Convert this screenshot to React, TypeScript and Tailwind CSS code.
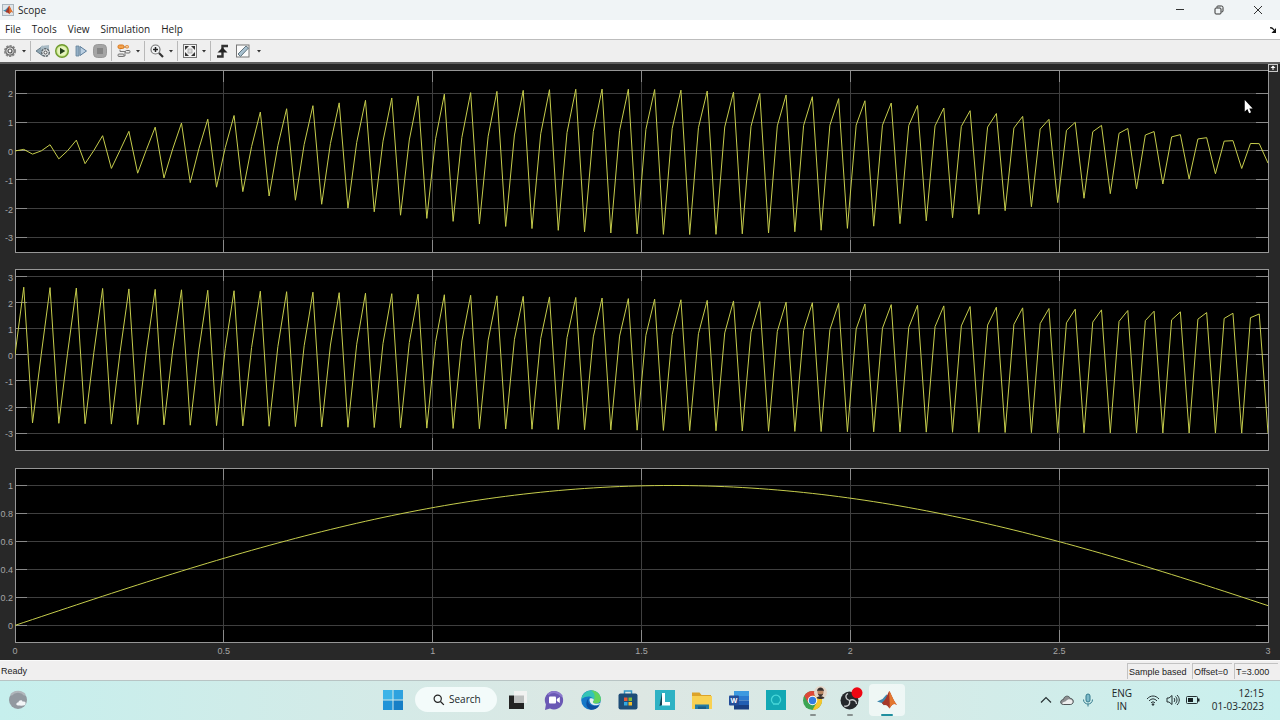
import type { ReactNode } from 'react';

type Point = [number, number];

interface PlotProps {
  label: string;
  min: number;
  max: number;
  ticks: number[];
  data: Point[];
  showTime?: boolean;
  className: string;
}

const T_END = 3;
const TIME_TICKS = [0, 0.5, 1, 1.5, 2, 2.5, 3];
const SAMPLES = 143;

const times = Array.from({ length: SAMPLES + 1 }, (_, i) => (i * T_END) / SAMPLES);
const message: Point[] = times.map((t) => [t, Math.sin(t)]);
const carrier: Point[] = times.map((t) => [t, 3 * Math.sin(100 * t)]);
const modulated: Point[] = times.map((t) => [t, 3 * Math.sin(100 * t) * Math.sin(t)]);

function Plot({ label, min, max, ticks, data, showTime, className }: PlotProps) {
  const yPos = (v: number) => `${((max - v) / (max - min)) * 100}%`;
  const xPos = (t: number) => `${(t / T_END) * 100}%`;
  const points = data
    .map(([t, v]) => `${((t / T_END) * 1000).toFixed(2)},${(((max - v) / (max - min)) * 1000).toFixed(2)}`)
    .join(' ');

  return (
    <div className={`relative min-h-24 ${className}`}>
      <svg role="img" aria-label={label} className="absolute inset-0 h-full w-full overflow-visible bg-black">
        <g stroke="#3f3f3f" strokeWidth="1" shapeRendering="crispEdges">
          {ticks.map((v) => (
            <line key={v} x1="0" x2="100%" y1={yPos(v)} y2={yPos(v)} />
          ))}
          {TIME_TICKS.slice(1, -1).map((t) => (
            <line key={t} x1={xPos(t)} x2={xPos(t)} y1="0" y2="100%" />
          ))}
        </g>
        <g stroke="#8a8a8a" strokeWidth="1" shapeRendering="crispEdges">
          {ticks.map((v) => (
            <line key={v} x1="0" x2="12" y1={yPos(v)} y2={yPos(v)} />
          ))}
          {TIME_TICKS.slice(1, -1).map((t) => (
            <line key={t} x1={xPos(t)} x2={xPos(t)} y1="0" y2="12" />
          ))}
          <svg x="100%" className="overflow-visible">
            {ticks.map((v) => (
              <line key={v} x1="-12" x2="0" y1={yPos(v)} y2={yPos(v)} />
            ))}
          </svg>
          <svg y="100%" className="overflow-visible">
            {TIME_TICKS.slice(1, -1).map((t) => (
              <line key={t} x1={xPos(t)} x2={xPos(t)} y1="-12" y2="0" />
            ))}
          </svg>
          <rect width="100%" height="100%" fill="none" stroke="#969696" />
        </g>
        <svg viewBox="0 0 1000 1000" preserveAspectRatio="none" width="100%" height="100%">
          <polyline points={points} fill="none" stroke="#c6cd4c" strokeWidth="1" vectorEffect="non-scaling-stroke" />
        </svg>
        <g fill="#a6a6a6" className="text-[9px]">
          {ticks.map((v) => (
            <text key={v} x="-2" y={yPos(v)} dy="4" textAnchor="end">
              {v}
            </text>
          ))}
          {showTime && (
            <svg y="100%" className="overflow-visible">
              {TIME_TICKS.map((t) => (
                <text key={t} x={xPos(t)} y="12" textAnchor="middle">
                  {t}
                </text>
              ))}
            </svg>
          )}
        </g>
      </svg>
    </div>
  );
}

function MatlabMark() {
  return (
    <>
      <path d="M0 11.500 5.500 9l4-4.500 2.500 2L7 15.200 4.800 13z" fill="#3f87ad" />
      <path d="M12.200 1c2 2.500 3.700 8.800 7.800 14-2.500-1.700-4.500-2-7.500 3.500C11 16.500 9.500 14.500 7 15.200L4.800 13C9 10 10.500 4 12.200 1z" fill="#a6382a" />
      <path d="M12.200 1c2 2.500 3.700 8.800 7.800 14-2.500-1.700-4.500-2-7.500 3.500.8-6-.6-12.500-.3-17.500z" fill="#e3772f" />
    </>
  );
}

function ToolButton({ label, children, disabled }: { label: string; children: ReactNode; disabled?: boolean }) {
  return (
    <button aria-label={label} disabled={disabled} className="flex h-5 w-4 items-center justify-center">
      <svg viewBox="0 0 16 16" className="h-4 w-4">
        {children}
      </svg>
    </button>
  );
}

function Caret({ label }: { label: string }) {
  return (
    <button aria-label={label} className="flex h-5 w-2 items-center justify-center">
      <svg viewBox="0 0 8 8" className="h-2 w-2">
        <path d="M2 3h4L4 5.500z" fill="#333" />
      </svg>
    </button>
  );
}

function Separator() {
  return <div className="h-5 w-px bg-[#b9b9b9]" />;
}

function Toolbar() {
  return (
    <div role="toolbar" className="flex h-[23px] items-center gap-1 border-t border-[#bdbdbd] bg-[#efefef] pl-0.5">
      <div className="flex items-center gap-0.5">
        <ToolButton label="Configuration properties">
          <circle cx="8" cy="8" r="5.300" fill="none" stroke="#8a8a8a" strokeWidth="1.600" strokeDasharray="2.300 1.100" />
          <circle cx="8" cy="8" r="4.200" fill="#e9e9e9" stroke="#6a6a6a" strokeWidth="1.200" />
          <circle cx="8" cy="8" r="2" fill="#f4f4f4" stroke="#555" strokeWidth="1.200" />
        </ToolButton>
        <Caret label="Configuration menu" />
        <Separator />
      </div>
      <div className="flex items-center gap-[3px]">
        <ToolButton label="Step back">
          <path d="M1 8l7-5v10z" fill="#8fa6b3" stroke="#566b78" strokeWidth=".8" />
          <path d="M6 3l8-1v5H6z" fill="#a9bac4" />
          <circle cx="10.500" cy="9.500" r="3.800" fill="#dfe3e5" stroke="#5e676c" strokeWidth="1.400" strokeDasharray="2.400 .8" />
          <circle cx="10.500" cy="9.500" r="1.500" fill="#fff" stroke="#4b4b4b" strokeWidth="1" />
        </ToolButton>
        <ToolButton label="Run">
          <circle cx="8" cy="8" r="6.300" fill="#c8e48e" stroke="#6f9a2c" strokeWidth="1.400" />
          <circle cx="8" cy="8" r="4.600" fill="#e6f3bd" />
          <path d="M6 4.700L11.300 8 6 11.300z" fill="#24401b" />
        </ToolButton>
        <ToolButton label="Step forward">
          <path d="M3 3h3v10H3z" fill="#93aec4" stroke="#66839b" strokeWidth=".8" />
          <path d="M7 3.500L13.500 8 7 12.500z" fill="#bcd0e2" stroke="#5b7c9a" />
        </ToolButton>
        <ToolButton label="Stop" disabled>
          <rect x="1.500" y="1.500" width="13" height="13" rx="4" fill="#a5a5a5" stroke="#999" />
          <path d="M5 5h6v6H5z" fill="#868686" />
        </ToolButton>
        <Separator />
      </div>
      <div className="flex items-center gap-0.5">
        <ToolButton label="Highlight block">
          <path d="M7 4h3M4 6.500v2h5M9 8.500V13H7" fill="none" stroke="#777" />
          <rect x="2" y="2" width="6" height="3.500" rx="1.500" fill="#f3a24b" stroke="#d9771c" />
          <rect x="9.500" y="2.500" width="3" height="2.500" rx="1" fill="#f8c88f" stroke="#df8a3c" />
          <rect x="9.500" y="7.500" width="4.500" height="2.500" rx="1" fill="#eee" stroke="#6d6d6d" />
          <rect x="2" y="11" width="6" height="2.500" rx="1" fill="#ddd" stroke="#747474" />
        </ToolButton>
        <Caret label="Highlight menu" />
        <Separator />
      </div>
      <div className="flex items-center gap-0.5">
        <ToolButton label="Zoom">
          <circle cx="6.500" cy="6.500" r="4.500" fill="#f3f5f6" stroke="#777" strokeWidth="1.200" />
          <path d="M6.500 4v5M4 6.500h5" stroke="#222" strokeWidth="1.500" />
          <path d="M10 10l4 4" stroke="#333" strokeWidth="2.200" />
        </ToolButton>
        <Caret label="Zoom menu" />
        <Separator />
      </div>
      <div className="flex items-center gap-0.5">
        <ToolButton label="Scale axes">
          <rect x="1.500" y="1.500" width="13" height="13" fill="#f4f4f4" stroke="#777" />
          <rect x="6" y="6" width="4" height="4" fill="#ddd" stroke="#aaa" strokeWidth=".8" />
          <path d="M3 3h4L3 7zM13 3v4L9 3zM3 13V9l4 4zM13 13H9l4-4z" fill="#333" />
        </ToolButton>
        <Caret label="Scale menu" />
        <Separator />
      </div>
      <div className="flex items-center gap-1">
        <ToolButton label="Triggers">
          <path d="M2 13.500h5.500V3H13" fill="none" stroke="#333" strokeWidth="2.400" />
          <path d="M2.500 9.500L7.500 4.500l5 5z" fill="#222" />
        </ToolButton>
        <ToolButton label="Measurements">
          <rect x="1.500" y="2" width="12.500" height="12" fill="#fbfbfb" stroke="#777" />
          <path d="M3 11L11 3l2.500 2-8 8.500z" fill="#a8c0cf" stroke="#60747f" />
        </ToolButton>
        <Caret label="Measurements menu" />
      </div>
    </div>
  );
}

function TaskIcon({ label, children, active, running }: { label: string; children: ReactNode; active?: boolean; running?: boolean }) {
  return (
    <button
      aria-label={label}
      className={`relative flex h-8 w-9 items-center justify-center rounded ${active ? 'bg-white/60' : ''}`}
    >
      <svg viewBox="0 0 20 20" className="h-5 w-5 overflow-visible">
        {children}
      </svg>
      {running && <span className="absolute bottom-0 h-0.5 w-1.5 rounded-full bg-[#87908f]" />}
      {active && <span className="absolute bottom-0 h-0.5 w-3 rounded-full bg-[#1f8f9f]" />}
    </button>
  );
}

function Taskbar() {
  return (
    <footer className="grid h-10 grid-cols-[1fr_auto_1fr] items-center border-t border-[#b8c4c4] bg-linear-to-r from-[#c6efed] via-[#dde7e3] to-[#c9f0ee] pb-0.5 font-['Open_Sans','Noto_Sans',sans-serif] text-[#202628]">
      <button aria-label="Widgets" className="ml-2 flex w-5 justify-center">
        <svg viewBox="0 0 20 20" className="h-5 w-5">
          <circle cx="10" cy="10" r="9" fill="#9299a0" />
          <path d="M3 5a9 9 0 0 1 14 0" fill="none" stroke="#b0b6bb" strokeWidth="2" />
          <path d="M10 15.500c-2.500-.3-2-3.200.3-3 .6-2.700 3.700-2.700 4.400-.8 3-.5 3.700 1.300 2.300 3.300-1.500.8-4 .7-7 .5z" fill="#f2f5f7" />
        </svg>
      </button>

      <nav className="flex items-center gap-px">
        <TaskIcon label="Start">
          <path d="M0 0h9.500v9.500H0z" fill="#3cb4e8" />
          <path d="M10.500 0H20v9.500h-9.500z" fill="#2ea2df" />
          <path d="M0 10.500h9.500V20H0z" fill="#2094d8" />
          <path d="M10.500 10.500H20V20h-9.500z" fill="#167fc6" />
        </TaskIcon>
        <button className="mr-px ml-[3px] flex h-[25px] w-[82px] items-center gap-1 rounded-full bg-[#f3fbfa] pl-[18px] text-[10px]">
          <svg viewBox="0 0 14 14" className="h-3 w-3">
            <circle cx="5.500" cy="5.500" r="4.200" fill="none" stroke="#222" strokeWidth="1.400" />
            <path d="M8.700 8.700l4 4" stroke="#222" strokeWidth="1.500" />
          </svg>
          Search
        </button>
        <TaskIcon label="Task view">
          <path d="M2 5.500h15V19H2z" fill="#222" />
          <path d="M7 1h13v12H7z" fill="#f1f2f1" />
          <path d="M7 5.500h10V13H7z" fill="#bcbfbe" />
        </TaskIcon>
        <TaskIcon label="Chat">
          <path d="M10 1a9.200 9.200 0 1 1-4 17.500L1 20l.9-5.400A9.200 9.200 0 0 1 10 1z" fill="#6b59b5" />
          <path d="M4 4.500a9.200 9.200 0 0 1 14 2" fill="none" stroke="#8b78cd" strokeWidth="2" />
          <rect x="5" y="6.500" width="7" height="7" rx="1" fill="#fff" />
          <path d="M12.800 9l3-2v6l-3-2z" fill="#fff" />
        </TaskIcon>
        <TaskIcon label="Edge">
          <circle cx="10" cy="10" r="9.800" fill="#1678c8" />
          <path d="M.3 9C1.500 2 8-1 14 1c4 1.500 6 5 5.800 8.500-.3 3-3 4.500-6.300 4-1.700-.3-2-1-1.200-2C14 8 8 3.500.3 9z" fill="#35c4b5" />
          <path d="M10 .3c5 0 10 4 9.800 9.200-.3 3-3 4.500-6.300 4-1.700-.3-2-1-1.200-2C14 8.500 15 3 10 .3z" fill="#63d45c" />
          <path d="M8 8c-3 4.500 1.500 9.500 10.500 7.300A10 10 0 0 1 10 19.800C4.500 18.500 4 11 8 8z" fill="#0d4f9e" />
          <path d="M8.800 8.600c1.600-1 4-.3 4 1.400 0 1.200-1.600 1.500-.6 2.700 1.200 1.500 5 1.200 7.800.2-2.300 2.900-7.800 3.400-10.100.7-1.300-1.500-1.700-3.500-1.100-5z" fill="#e6f0ee" />
        </TaskIcon>
        <TaskIcon label="Microsoft Store">
          <path d="M6.500 4V1h7v3" fill="none" stroke="#3498c8" strokeWidth="1.500" />
          <rect x=".5" y="3.500" width="19" height="16" rx="2" fill="#1d4d78" />
          <path d="M6 7.500h3.500V11H6z" fill="#ea5a36" />
          <path d="M10.500 7.500H14V11h-3.500z" fill="#84bd37" />
          <path d="M6 12h3.500v3.500H6z" fill="#33a8e0" />
          <path d="M10.500 12H14v3.500h-3.500z" fill="#f4bd2b" />
        </TaskIcon>
        <TaskIcon label="L">
          <path d="M0 0h20v20H0z" fill="#2fb2c4" />
          <path d="M4.500 16L7 3v12z" fill="#173f50" />
          <path d="M7 3h3v9h5v3.500H7z" fill="#fff" />
        </TaskIcon>
        <TaskIcon label="File Explorer">
          <path d="M0 2.500h7.500L9.500 5H19v5H0z" fill="#dca32a" />
          <path d="M0 6h20v13H0z" fill="#f8d152" />
          <path d="M3 14.500h14V19H3z" fill="#257da5" />
          <path d="M6 16.500h8V19H6z" fill="#1b5d85" />
        </TaskIcon>
        <TaskIcon label="Word">
          <path d="M5 1h15v5H5z" fill="#3d9ae0" />
          <path d="M5 6h15v4.500H5z" fill="#2c7bd0" />
          <path d="M5 10.500h15V15H5z" fill="#215eb3" />
          <path d="M5 15h15v4.500H5z" fill="#193f82" />
          <rect y="5.500" width="10" height="10" rx="1" fill="#234d99" />
          <text x="5" y="13" textAnchor="middle" fontSize="7" fontWeight="700" fill="#fff">W</text>
        </TaskIcon>
        <TaskIcon label="Recorder">
          <path d="M0 0h20v20H0z" fill="#13a8b4" />
          <path d="M7 14h6M7.300 13.500a4.600 4.600 0 1 1 5.400 0" fill="none" stroke="#49d7d9" strokeWidth="1.300" />
        </TaskIcon>
        <TaskIcon label="Chrome" running>
          <circle cx="9.500" cy="10.500" r="9.500" fill="#3ca453" />
          <path d="M1.300 5.700A9.500 9.500 0 0 1 17.700 5.700H9.500L5.400 12.900z" fill="#dd4839" />
          <path d="M17.700 5.700a9.500 9.500 0 0 1-8.200 14.300l4.100-7.200-4.100-7.100z" fill="#f5c52c" />
          <circle cx="9.500" cy="10.500" r="4.700" fill="#fff" />
          <circle cx="9.500" cy="10.500" r="3.700" fill="#347de0" />
          <circle cx="17.500" cy="2.500" r="6.500" fill="#e4d6c8" />
          <circle cx="17.500" cy="2.500" r="3" fill="#b98764" />
          <path d="M14 1.500c0-5.500 7-5.500 7 0l-1-.8h-5zM15 3.500c0 3.500 5 3.500 5 0l-1 .8h-3zM13.500 8c1-2.500 7-2.500 8 0-2 1.300-6 1.300-8 0z" fill="#39302d" />
        </TaskIcon>
        <TaskIcon label="OBS Studio" running>
          <circle cx="9.500" cy="10.500" r="9" fill="#25282b" />
          <path d="M9.500 10.500C5 9 5 5 8 3.500M9.500 10.500c4-2 7 .5 7 3.500M9.500 10.500c1 4.500-2 6.500-5.500 5.500" fill="none" stroke="#c9cccd" strokeWidth="1.300" />
          <circle cx="17" cy="2.800" r="5.500" fill="#ee0612" />
        </TaskIcon>
        <TaskIcon label="MATLAB" active>
          <MatlabMark />
        </TaskIcon>
      </nav>

      <div className="flex items-center justify-end pr-4 text-[10px] leading-[13px]">
        <button aria-label="Show hidden icons" className="mr-2 flex w-3 justify-center">
          <svg viewBox="0 0 12 12" className="h-3 w-3" fill="none" stroke="#293335" strokeWidth="1.200">
            <path d="M1 8.500l5-5 5 5" />
          </svg>
        </button>
        <button aria-label="OneDrive" className="mr-2">
          <svg viewBox="0 0 14 12" className="h-3 w-3.5">
            <path d="M3.500 10.500C-.5 10.500 0 5.500 3.500 5.500 4 1.500 9 1 10.300 4.500c4-.2 4 6 0 6z" fill="#8d8f91" stroke="#505658" />
            <path d="M2.500 10C2 7.500 5.500 8 6 7c2-2.500 6-2 6.500.5.200 1.500-.7 2.500-2 2.500z" fill="#eee" />
          </svg>
        </button>
        <button aria-label="Microphone" className="mr-4">
          <svg viewBox="0 0 12 14" className="h-3.5 w-3" fill="none" stroke="#347b8d">
            <rect x="4" y="1" width="4" height="8" rx="2" fill="#7dbac9" />
            <path d="M1.500 6.500c0 6 9 6 9 0M6 11v2.500" />
          </svg>
        </button>
        <button className="mr-3 w-6 text-center">ENG<br />IN</button>
        <button aria-label="Network, volume and battery" className="mr-3 flex items-center gap-1.5">
          <svg viewBox="0 0 14 12" className="h-3 w-3.5" fill="none" stroke="#253033">
            <path d="M1 5c3.500-4 8.500-4 12 0M3 7c2.500-2.800 5.500-2.800 8 0M5 9c1.200-1.500 2.800-1.500 4 0" />
            <circle cx="7" cy="10.500" r=".8" fill="#253033" />
          </svg>
          <svg viewBox="0 0 14 12" className="h-3 w-3.5" fill="none" stroke="#253033">
            <path d="M1 4h2l3-2.500v9L3 8H1zM8 4c1 1 1 3 0 4M9.500 2.500c2 2 2 5 0 7M11 1c3 3 3 7 0 10" />
          </svg>
          <svg viewBox="0 0 14 12" className="h-3 w-3.5">
            <rect x=".5" y="2.500" width="11" height="7" rx="1" fill="none" stroke="#253033" />
            <path d="M2 4h5v4H2zM12 4.500h1.500v3H12z" fill="#162023" />
          </svg>
        </button>
        <time className="text-right" dateTime="2023-03-01T12:15">12:15<br />01-03-2023</time>
      </div>
    </footer>
  );
}

export default function App() {
  return (
    <div className="flex min-h-screen flex-col overflow-hidden bg-white font-['Liberation_Sans',Arial,sans-serif]">
      <header className="flex h-5 items-center justify-between bg-[#f0f4f6] font-['Open_Sans','Noto_Sans',sans-serif] text-[10px] text-[#222]">
        <div className="flex items-center gap-1 pl-0.5">
          <span className="flex h-3 w-3 items-center justify-center border border-[#a9b5bd] bg-[#dfe5e9]">
            <svg viewBox="0 0 20 20" className="h-2.5 w-2.5">
              <MatlabMark />
            </svg>
          </span>
          <h1>Scope</h1>
        </div>
        <div className="flex items-center gap-[27px] pr-4">
          <button aria-label="Minimize">
            <svg viewBox="0 0 12 12" className="h-3 w-3"><path d="M2 5.500h8" stroke="#333" /></svg>
          </button>
          <button aria-label="Restore">
            <svg viewBox="0 0 12 12" className="h-3 w-3" fill="none" stroke="#333">
              <rect x="2" y="4" width="6" height="6" rx="1" />
              <path d="M4 3.500V2.500q0-.5 1-.5h3.500Q10 2 10 3.500V7q0 1-1.500 1" />
            </svg>
          </button>
          <button aria-label="Close">
            <svg viewBox="0 0 12 12" className="h-3 w-3" stroke="#333"><path d="M2 2l8 8M10 2l-8 8" /></svg>
          </button>
        </div>
      </header>

      <nav className="flex h-[19px] items-center bg-white pr-1 pl-[5px] font-['Open_Sans','Noto_Sans',sans-serif] text-[10px] text-[#222]">
        <div className="flex flex-1 gap-[11px]">
          <button>File</button>
          <button>Tools</button>
          <button>View</button>
          <button>Simulation</button>
          <button>Help</button>
        </div>
        <button aria-label="Dock window">
          <svg viewBox="0 0 6 6" className="h-1.5 w-1.5">
            <path d="M0 1q2-1 4 2" fill="none" stroke="#111" strokeWidth="1.300" />
            <path d="M6 1v5H1.500z" fill="#111" />
          </svg>
        </button>
      </nav>

      <Toolbar />

      <main className="relative flex flex-1 flex-col gap-[17px] border-t-2 border-[#5f5f5f] bg-[#282828] pt-1.5 pr-3 pb-[18px] pl-[15px]">
        <Plot label="Modulated signal" min={-3.52} max={2.81} ticks={[2, 1, 0, -1, -2, -3]} data={modulated} className="flex-[182]" />
        <Plot label="Carrier signal" min={-3.66} max={3.29} ticks={[3, 2, 1, 0, -1, -2, -3]} data={carrier} className="flex-[181]" />
        <Plot label="Message signal" min={-0.121} max={1.125} ticks={[1, 0.8, 0.6, 0.4, 0.2, 0]} data={message} showTime className="flex-[174]" />
        <button aria-label="Maximize axes" className="absolute top-0 right-0.5">
          <svg viewBox="0 0 10 8" className="h-2 w-2.5">
            <rect x=".5" y=".5" width="9" height="7" fill="#333" stroke="#c8c8c8" />
            <path d="M5 1.500L7.500 4h-2v2h-1V4h-2z" fill="#fff" />
          </svg>
        </button>
        <svg viewBox="0 0 12 16" className="absolute top-9 right-6 h-3.5 w-3">
          <path d="M0 0v13l3-2.700L5 15l2.200-1-2-4.300H9z" fill="#fff" />
        </svg>
      </main>

      <div role="status" className="flex h-5 items-center justify-between border-t border-[#fafafa] bg-[#f0efef] text-[9px] text-[#222]">
        <span className="pl-px leading-4">Ready</span>
        <div className="flex h-4 gap-0.5 pr-0.5 leading-4">
          <span className="w-[63px] border-t border-l border-[#c2c2c2] pl-px">Sample based</span>
          <span className="w-10 border-t border-l border-[#c2c2c2] pl-px">Offset=0</span>
          <span className="w-11 border-t border-l border-[#c2c2c2] pl-px">T=3.000</span>
        </div>
      </div>

      <Taskbar />
    </div>
  );
}
